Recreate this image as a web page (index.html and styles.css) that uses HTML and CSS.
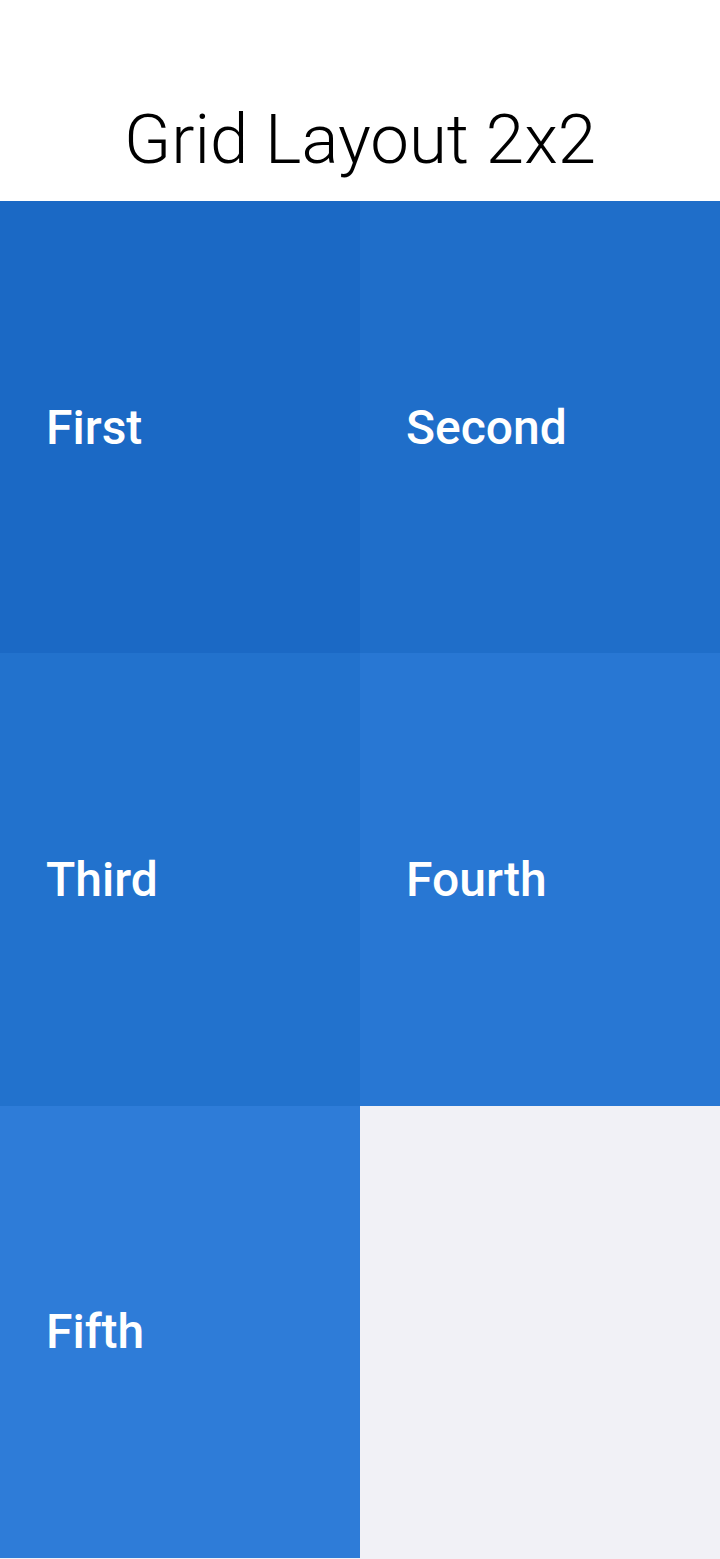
FILE: index.html
```html
<!DOCTYPE html>
<html lang="en">
<head>
    <meta charset="UTF-8">
    <title>Grid Layout 2x2</title>
    <link rel="stylesheet" href="styles.css">
</head>
<body>
<div class="header">
    <h1 class="title">Grid Layout 2x2</h1>
</div>
<div class="grid">
    <div class="cell c1"><span>First</span></div>
    <div class="cell c2"><span>Second</span></div>
    <div class="cell c3"><span>Third</span></div>
    <div class="cell c4"><span>Fourth</span></div>
    <div class="cell c5"><span>Fifth</span></div>
</div>
</body>
</html>
```
FILE: styles.css
```css
*{
    margin: 0;
    padding: 0;
    box-sizing: border-box;
}
html,body{
    height: 100%;
}
body{
    background-color: #f1f1f6;
    font-family: Roboto, "Liberation Sans", sans-serif;
    display: flex;
    flex-direction: column;
}
.header{
    height: 201px;
    background-color: #fff;
    display: flex;
    align-items: flex-end;
    justify-content: center;
    padding-bottom: 27px;
}
.title{
    font-weight: 300;
    font-size: 69px;
    line-height: 1;
    color: #000;
}
/* three rows of equal height, two columns */
.grid{
    height: 1357px;
    display: grid;
    grid-template-columns: 360px 360px;
    grid-template-rows: repeat(3, 1fr);
}
.cell{
    display: flex;
    align-items: center;
    padding-left: 46px;
    color: #fff;
    font-size: 48px;
    font-weight: 500;
}
.c1{ background-color: #1b69c5; }
.c2{ background-color: #1f6ec9; }
.c3{ background-color: #2272cd; }
.c4{ background-color: #2877d3; }
.c5{ background-color: #2e7cd8; }
```
